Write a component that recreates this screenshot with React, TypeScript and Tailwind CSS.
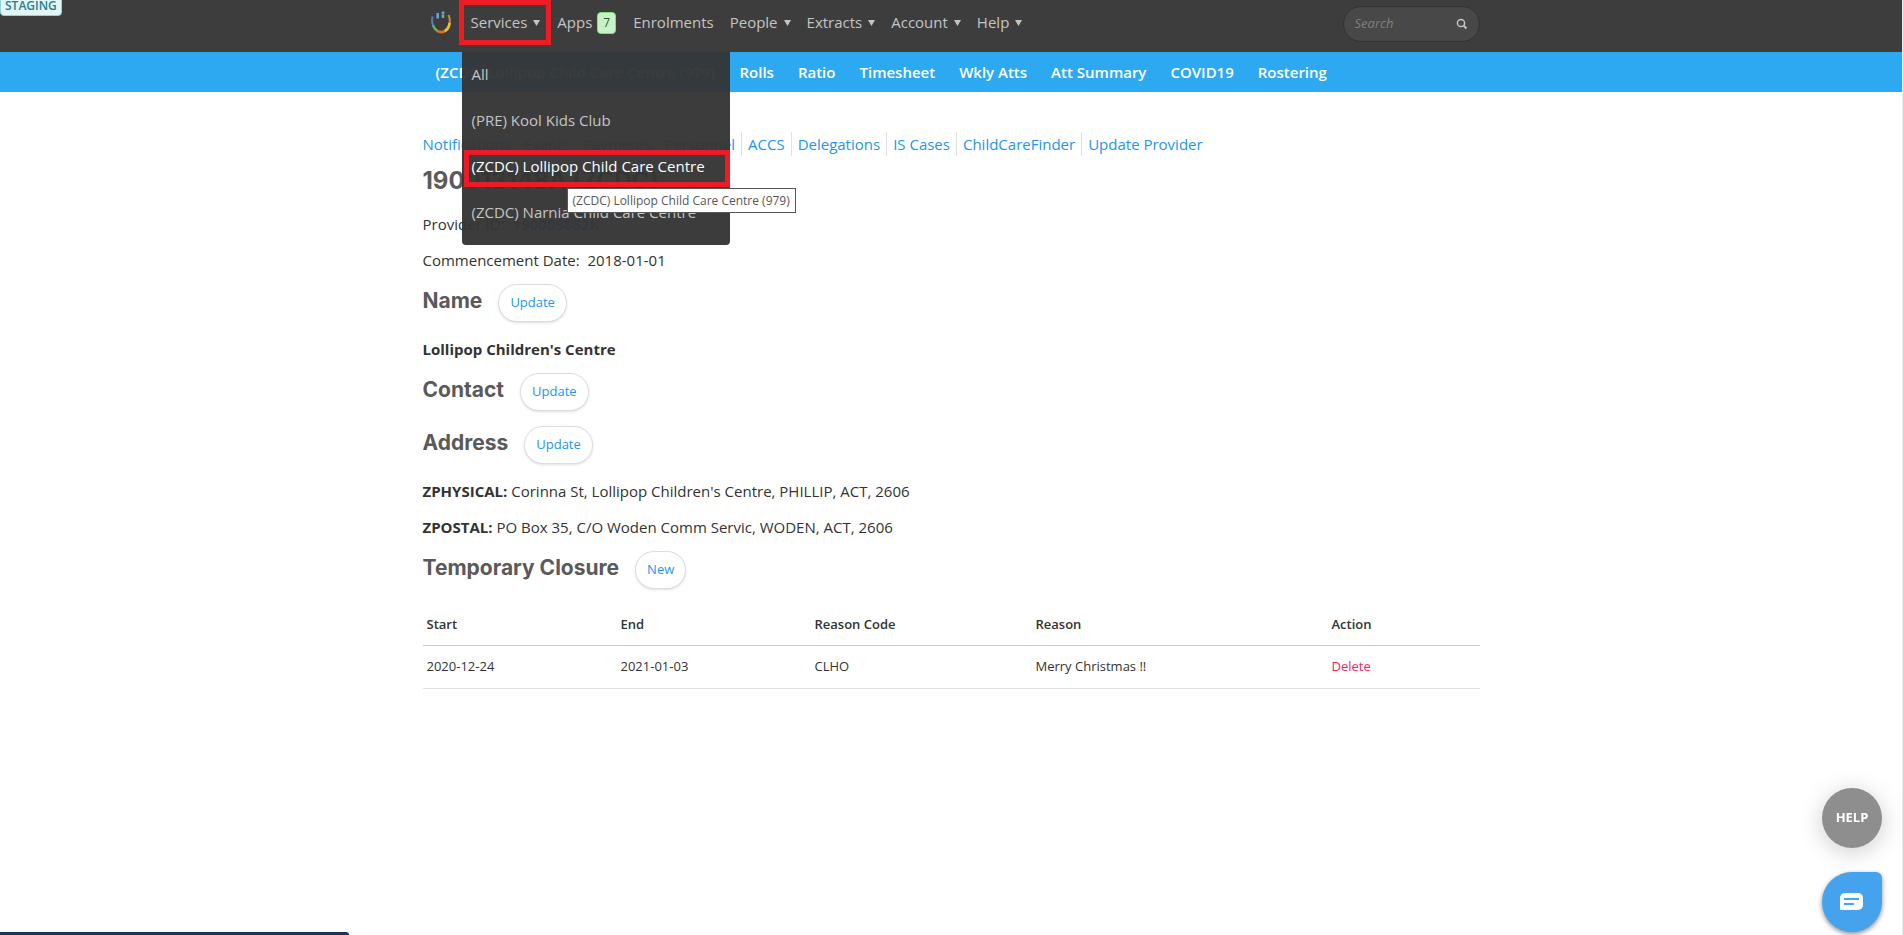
import { ReactNode } from 'react'

const dropdowns = ['People', 'Extracts', 'Account', 'Help']
const serviceLinks = ['Rolls', 'Ratio', 'Timesheet', 'Wkly Atts', 'Att Summary', 'COVID19', 'Rostering']
const tabs = ['Notifications', 'Events', 'Payments', 'Personnel', 'ACCS', 'Delegations', 'IS Cases', 'ChildCareFinder', 'Update Provider']
const services = ['All', '(PRE) Kool Kids Club', '(ZCDC) Lollipop Child Care Centre', '(ZCDC) Narnia Child Care Centre']

function Logo() {
  return (
    <svg className="h-[23px] w-5" viewBox="0 0 20 23" fill="none" strokeWidth="2">
      <path d="M1.600 5.500C0.800 8.500 0.900 11.500 2 14" stroke="#5d79c0" />
      <path d="M2 14C2.800 17 4.500 19 7 20.300" stroke="#6fae6a" strokeWidth="2.400" />
      <path d="M6.500 20.200C9 21.500 11.500 21.400 14 20" stroke="#d9731f" strokeWidth="2.600" />
      <path d="M13.700 20.100C16.500 18.500 18.300 15.500 18.700 11.500" stroke="#eec22f" strokeWidth="2.600" />
      <path d="M18.700 11.800C19 9 18.700 6.500 17.500 4" stroke="#c9853c" />
      <path d="M6.700 2V7.500" stroke="#6d9fd8" strokeWidth="2.600" />
      <path d="M12 0.500V3.500" stroke="#6d9fd8" strokeWidth="2.600" />
      <path d="M12 3.500V7" stroke="#6fae8a" strokeWidth="2.600" />
    </svg>
  )
}

function Caret() {
  return (
    <svg className="ml-[6px] h-[6px] w-[7px]" viewBox="0 0 7 6" fill="currentColor">
      <path d="M0 0h7L3.500 6z" />
    </svg>
  )
}

function ServicesMenu() {
  return (
    <div className="absolute left-[-8px] top-[52px] z-10 h-[193px] w-[268px] rounded-b bg-[#343434]/96">
      <ul>
        {services.map((name) => (
          <li key={name} className="relative h-[46px]">
            <a href="#" className={name.includes('Lollipop') ? 'block px-[10px] leading-[44px] text-white' : 'block px-[10px] leading-[44px] text-[#c4c4c4]'}>{name}</a>
            {name.includes('Lollipop') && (
              <>
                <span className="absolute left-[2px] top-[6px] h-[37px] w-[266px] border-5 border-[#ed1c24]" />
                <span role="tooltip" className="absolute left-[105px] top-[44px] z-20 flex h-[25px] items-center whitespace-nowrap border border-[#575757] bg-white px-[5px] text-[12px] text-[#575757]">
                  (ZCDC) Lollipop Child Care Centre (979)
                </span>
              </>
            )}
          </li>
        ))}
      </ul>
    </div>
  )
}

function Section({ title, action }: { title: string, action: string }) {
  return (
    <div className="flex items-start gap-4">
      <h2 className="font-[Inter,sans-serif] text-[21px] leading-[34px] font-bold text-[#5a5a5a]">{title}</h2>
      <button className="h-[38px] rounded-full border border-[#dedede] bg-white px-[11px] text-[13px] text-[#2196f3] shadow-sm">{action}</button>
    </div>
  )
}

function Para({ children }: { children: ReactNode }) {
  return <p className="h-9 leading-9 whitespace-pre">{children}</p>
}

export default function App() {
  return (
    <div className="relative min-h-screen border-r border-[#ececec] bg-white font-['Open_Sans',sans-serif] text-[15px] text-[#333]">
      <header className="bg-[#3d3d3d] text-[#c4c4c4]">
        <div className="mx-auto flex h-[52px] max-w-[1057px] items-start justify-between">
          <nav className="flex h-[45px] items-center pl-2">
            <a href="#" aria-label="Home"><Logo /></a>
            <div className="relative ml-5">
              <button className="flex items-center">Services<Caret /></button>
              <span className="absolute left-[-12px] top-[-11px] h-[45px] w-[92px] border-5 border-[#ed1c24]" />
            </div>
            <a href="#" className="ml-[17px] flex items-center gap-[5px]">
              Apps
              <span className="rounded border border-[#7be07b] bg-[#c6f2c6] px-[5px] text-[12px] leading-[20px] text-[#2f5a2f]">7</span>
            </a>
            <a href="#" className="ml-[17px]">Enrolments</a>
            {dropdowns.map((name) => (
              <button key={name} className="ml-4 flex items-center">{name}<Caret /></button>
            ))}
          </nav>
          <form className="mt-[6px] flex h-[36px] w-[137px] items-center rounded-full border border-[#323232] bg-[#484848]">
            <input aria-label="Search" placeholder="Search" className="w-[104px] pl-[11px] text-[13px] italic outline-none placeholder:text-[#808080]" />
            <button aria-label="Submit search" className="ml-2">
              <svg className="h-3 w-3" viewBox="0 0 12 12" fill="none" stroke="#c4c4c4" strokeWidth="1.500">
                <circle cx="5" cy="5" r="3.600" />
                <path d="M7.800 7.800L10.500 10.500" strokeWidth="2" />
              </svg>
            </button>
          </form>
        </div>
      </header>

      <div className="bg-[#2ca9f1] text-white">
        <nav className="mx-auto flex h-10 max-w-[1057px] items-center gap-6 pl-[13px] font-semibold">
          <a href="#" className="w-[280px] whitespace-nowrap">(ZCDC) Lollipop Child Care Centre (979)</a>
          {serviceLinks.map((name) => <a key={name} href="#" className="whitespace-nowrap">{name}</a>)}
        </nav>
      </div>

      <main className="mx-auto max-w-[1057px] pt-10">
        <nav className="flex text-[#2196f3]">
          {tabs.map((name) => (
            <a key={name} href="#" className="mr-[6px] border-r border-[#dee2e6] pr-[6px] leading-6 last:border-0">{name}</a>
          ))}
        </nav>
        <h1 className="mt-2 font-[Inter,sans-serif] text-[24px] leading-[34px] font-bold text-[#5a5a5a]">190013148A (ZCDC)</h1>
        <div className="mt-2">
          <Para>Provider ID:  <a href="#" className="font-bold text-[#2196f3]">190009862K</a></Para>
          <Para>Commencement Date:  2018-01-01</Para>
        </div>
        <div className="mt-[6px]"><Section title="Name" action="Update" /></div>
        <div className="mt-[9px]"><Para><b>Lollipop Children's Centre</b></Para></div>
        <div className="mt-[6px]"><Section title="Contact" action="Update" /></div>
        <div className="mt-[15px]"><Section title="Address" action="Update" /></div>
        <div className="mt-[9px]">
          <Para><b>ZPHYSICAL:</b> Corinna St, Lollipop Children's Centre, PHILLIP, ACT, 2606</Para>
          <Para><b>ZPOSTAL:</b> PO Box 35, C/O Woden Comm Servic, WODEN, ACT, 2606</Para>
        </div>
        <div className="mt-[6px]"><Section title="Temporary Closure" action="New" /></div>
        <table className="mt-4 w-full table-fixed text-left text-[13px]">
          <thead>
            <tr className="h-10 border-b border-[#c8ccd0]">
              <th className="w-[194px] px-1 font-semibold">Start</th>
              <th className="w-[194px] px-1 font-semibold">End</th>
              <th className="w-[221px] px-1 font-semibold">Reason Code</th>
              <th className="w-[296px] px-1 font-semibold">Reason</th>
              <th className="px-1 font-semibold">Action</th>
            </tr>
          </thead>
          <tbody>
            <tr className="h-[43px] border-b border-[#dee2e6]">
              <td className="px-1">2020-12-24</td>
              <td className="px-1">2021-01-03</td>
              <td className="px-1">CLHO</td>
              <td className="px-1">Merry Christmas !!</td>
              <td className="px-1"><a href="#" className="text-[#f5225f]">Delete</a></td>
            </tr>
          </tbody>
        </table>
      </main>

      <div className="absolute inset-x-0 top-0 mx-auto h-0 max-w-[1057px]">
        <div className="relative ml-[47px]"><ServicesMenu /></div>
      </div>

      <span className="absolute left-0 top-[-5px] rounded-b border border-[#8fd3d8] bg-[#e3f6f7] px-1 text-[12px] leading-[19px] font-semibold text-[#2a7f88]">STAGING</span>

      <div className="fixed bottom-[3px] right-[21px] flex flex-col gap-6">
        <button className="h-[60px] w-[60px] rounded-full bg-[#8e8e8e] text-[13px] font-bold text-white shadow-[0_4px_24px_rgba(0,0,0,0.2)]">HELP</button>
        <button aria-label="Open chat" className="flex h-[60px] w-[60px] items-center justify-center rounded-[30px] rounded-tr-md bg-[#45a2ec] shadow-[0_2px_5px_rgba(0,0,0,0.45)]">
          <svg className="h-[18px] w-6" viewBox="0 0 24 18">
            <path d="M5 0h13a5 5 0 0 1 5 5v7a5 5 0 0 1-5 5H1a1 1 0 0 1-1-1V5a5 5 0 0 1 5-5z" fill="#fff" />
            <path d="M4 6h15M4 11h10" stroke="#45a2ec" strokeWidth="2" />
          </svg>
        </button>
      </div>
      <div className="fixed bottom-0 left-0 h-[3px] w-[349px] rounded-tr bg-[#17335f]" />
    </div>
  )
}
